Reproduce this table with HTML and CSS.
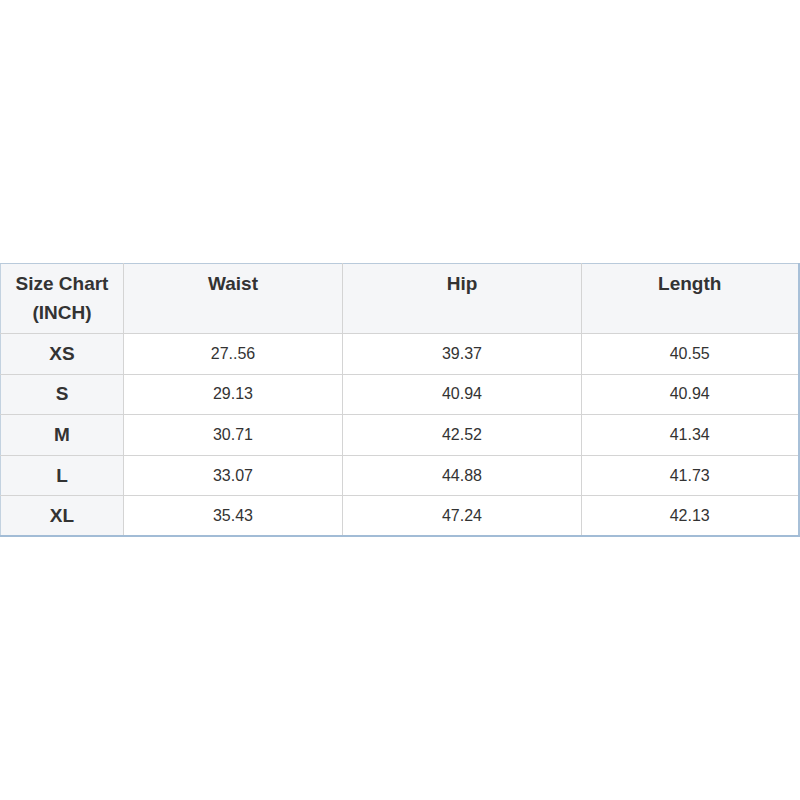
FILE: index.html
```html
<!DOCTYPE html>
<html>
<head>
<meta charset="utf-8">
<link rel="stylesheet" href="styles.css">
</head>
<body>
<div class="page">
<table class="chart">
<colgroup>
<col class="c1"><col class="c2"><col class="c3"><col class="c4">
</colgroup>
<thead>
<tr class="head">
<th>Size Chart<br>(INCH)</th><th>Waist</th><th>Hip</th><th>Length</th>
</tr>
</thead>
<tbody>
<tr><th>XS</th><td>27..56</td><td>39.37</td><td>40.55</td></tr>
<tr><th>S</th><td>29.13</td><td>40.94</td><td>40.94</td></tr>
<tr><th>M</th><td>30.71</td><td>42.52</td><td>41.34</td></tr>
<tr><th>L</th><td>33.07</td><td>44.88</td><td>41.73</td></tr>
<tr><th>XL</th><td>35.43</td><td>47.24</td><td>42.13</td></tr>
</tbody>
</table>
</div>
</body>
</html>
```
FILE: styles.css
```css
html, body {
  margin: 0;
  padding: 0;
  background: #ffffff;
}
.page {
  width: 800px;
  height: 800px;
  display: flex;
  align-items: flex-start;
  padding-top: 263px;
  box-sizing: border-box;
}
.chart {
  width: 798px;
  table-layout: fixed;
  border-collapse: collapse;
  font-family: "Liberation Sans", Arial, sans-serif;
  color: #333333;
  border-top: 1px solid #b9cadb;
  border-left: 1px solid #c3d2e0;
  border-right: 2px solid #a8c0d8;
  border-bottom: 2px solid #a2bcd6;
}
.c1 { width: 123px; }
.c2 { width: 219px; }
.c3 { width: 239px; }
.c4 { width: 217px; }
.chart th, .chart td {
  border: 1px solid #d4d4d4;
  text-align: center;
  padding: 0 4px;
  height: 40.6px;
  box-sizing: border-box;
}
.chart tbody th {
  background: #f5f6f8;
  font-size: 19px;
  font-weight: bold;
}
.chart td {
  font-size: 16px;
  background: #ffffff;
}
.chart thead th {
  background: #f5f6f8;
  font-size: 19px;
  font-weight: bold;
  vertical-align: top;
  line-height: 29px;
  height: 70px;
  padding-top: 5px;
  padding-bottom: 5px;
}
.chart thead tr th { border-top: none; }
.chart tr th:first-child { border-left: none; }
.chart tr > :last-child { border-right: none; }
.chart tbody tr:last-child > * { border-bottom: none; }
```
